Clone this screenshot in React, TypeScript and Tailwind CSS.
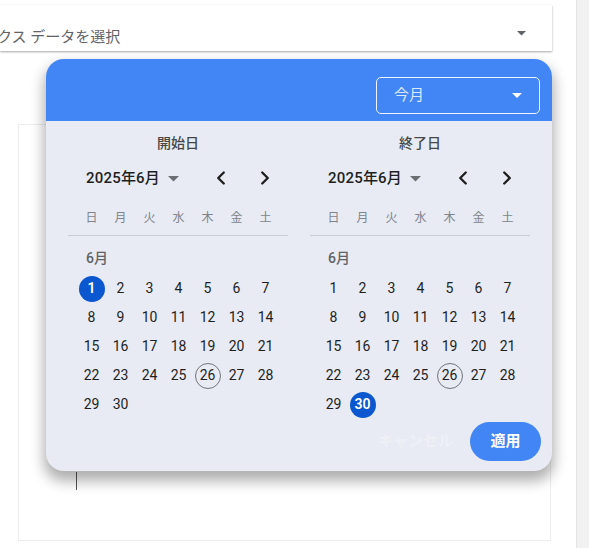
import React from "react";
import { ChevronLeft, ChevronRight } from "lucide-react";

const WEEK = ["日", "月", "火", "水", "木", "金", "土"];

function Triangle({ color, w = 10 }: { color: string; w?: number }) {
  return (
    <svg width={w} height={w / 2} viewBox="0 0 10 5" className="block">
      <path d="M0 0 L10 0 L5 5 Z" fill={color} />
    </svg>
  );
}

function Calendar({ title, selected }: { title: string; selected: number }) {
  const days: (number | null)[] = [];
  for (let i = 1; i <= 30; i++) days.push(i);
  return (
    <div className="w-[220px] flex flex-col">
      <div className="pt-[12px] h-[32px] leading-[20px] text-center text-[14px] text-[#444746] font-medium">{title}</div>
      <div className="mt-[7px] h-[36px] flex items-center pl-[18px] pr-[11px]">
        <span className="text-[15px] text-[#1f1f1f] font-medium tracking-[0.2px]">2025年6月</span>
        <span className="ml-[8px] mt-[2px]"><Triangle color="#6b6f74" w={11} /></span>
        <div className="ml-auto flex gap-[20px]">
          <button className="w-[24px] h-[24px] flex items-center justify-center text-[#1f1f1f]">
            <ChevronLeft size={22} strokeWidth={2.6} />
          </button>
          <button className="w-[24px] h-[24px] flex items-center justify-center text-[#1f1f1f]">
            <ChevronRight size={22} strokeWidth={2.6} />
          </button>
        </div>
      </div>
      <div className="mt-[9px] h-[26px] pl-[9px] grid grid-cols-[repeat(7,29px)] items-center">
        {WEEK.map((w) => (
          <div key={w} className="text-center text-[12px] text-[#80848a]">{w}</div>
        ))}
      </div>
      <div className="mt-[4px] border-t border-[#c9ccd3]" />
      <div className="mt-[12px] h-[20px] leading-[20px] pl-[18px] text-[14px] text-[#5f6368] font-medium">6月</div>
      <div className="mt-[6px] pl-[9px] grid grid-cols-[repeat(7,29px)] auto-rows-[29px]">
        {days.map((d, i) => (
          <div key={i} className="flex items-center justify-center">
            {d === selected ? (
              <div className="w-[26px] h-[26px] rounded-full bg-[#0b57d0] text-white text-[14px] font-semibold flex items-center justify-center">{d}</div>
            ) : d === 26 ? (
              <div className="w-[26px] h-[26px] rounded-full border border-[#70757a] text-[#1f1f1f] text-[14px] flex items-center justify-center">{d}</div>
            ) : (
              <div className="text-[14px] text-[#1f1f1f]">{d}</div>
            )}
          </div>
        ))}
      </div>
    </div>
  );
}

export default function App() {
  return (
    <div className="relative w-[589px] h-[548px] bg-white overflow-hidden flex font-['Roboto','Noto_Sans_CJK_JP',sans-serif]">
      <div className="w-[576px] flex flex-col">
        <div className="mt-[5px] w-[552px] h-[46px] bg-white shadow-[0_1px_2px_rgba(0,0,0,0.35)] flex items-center relative overflow-hidden">
          <span className="absolute left-[-3px] top-[21px] text-[15px] leading-[22px] text-[#5f6368] whitespace-nowrap">クス データを選択</span>
          <span className="absolute left-[517px] top-[26px]"><Triangle color="#5f6368" w={9} /></span>
        </div>
        <div className="mt-[73px] ml-[18px] w-[533px] h-[417px] border border-[#ededed] bg-white relative">
          <div className="absolute left-[57px] top-[347px] w-px h-[18px] bg-[#555]" />
        </div>
      </div>
      <div className="w-[13px] h-full bg-[#f1f1f1] border-l border-[#e4e4e4]" />

      <div className="absolute left-[46px] top-[59px] w-[506px] h-[412px] rounded-[18px] bg-[#e8ebf4] shadow-[0_8px_14px_2px_rgba(0,0,0,0.32)] overflow-hidden flex flex-col">
        <div className="h-[62px] bg-[#4285f4] flex justify-end items-start pt-[18px] pr-[12px]">
          <div className="w-[164px] h-[37px] border border-[#eef3fe] rounded-[5px] flex items-center pl-[17px] pr-[17px]">
            <span className="text-[15px] text-[#dde7fd]">今月</span>
            <span className="ml-auto"><Triangle color="#ffffff" w={10} /></span>
          </div>
        </div>
        <div className="flex gap-[22px] px-[22px]">
          <Calendar title="開始日" selected={1} />
          <Calendar title="終了日" selected={30} />
        </div>
        <div className="mt-[3px] h-[39px] flex justify-end items-center pr-[11px]">
          <span className="text-[15px] font-bold text-[#eef0f6] mr-[17px]">キャンセル</span>
          <button className="w-[71px] h-[39px] rounded-full bg-[#4285f4] text-white text-[15px] font-bold">適用</button>
        </div>
      </div>
    </div>
  );
}
